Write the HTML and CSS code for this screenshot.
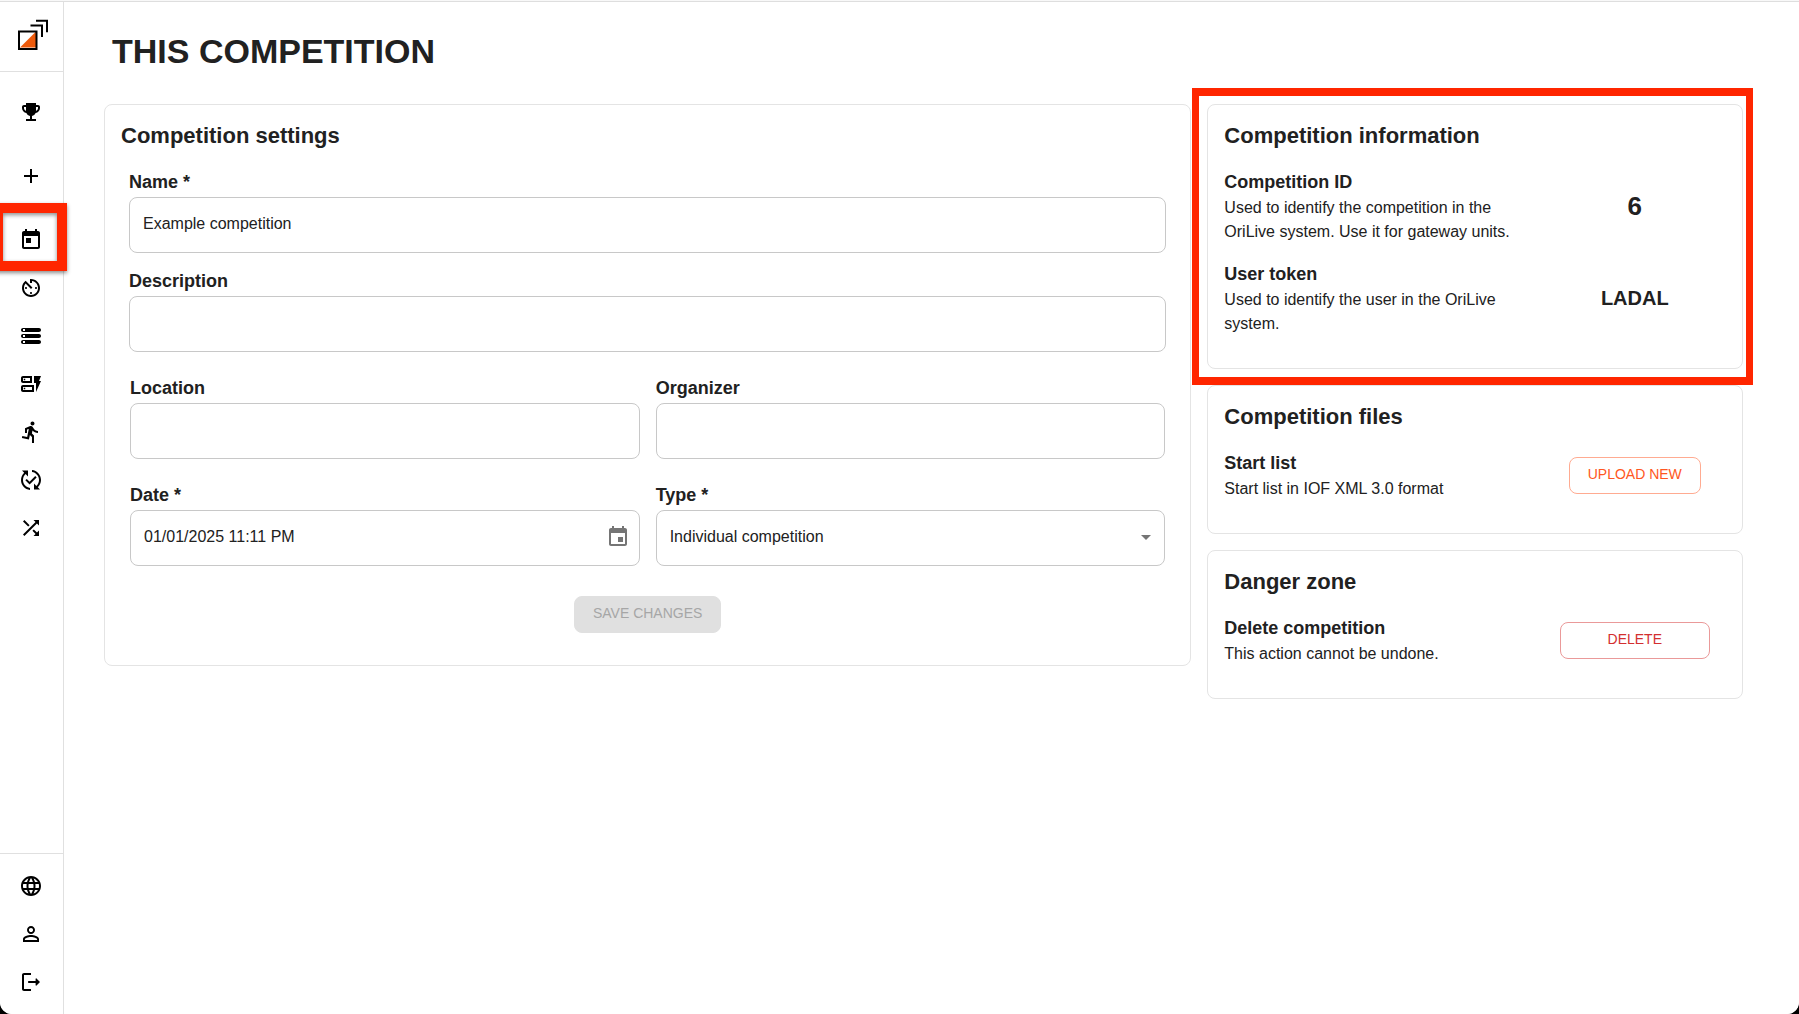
FILE: index.html
```html
<!DOCTYPE html>
<html lang="en">
<head>
<meta charset="utf-8">
<meta name="viewport" content="width=device-width, initial-scale=1">
<title>This competition</title>
<link rel="stylesheet" href="styles.css">
</head>
<body>
<div class="app">
  <aside class="sidebar">
    <a class="logo" href="#" aria-label="Home">
      <svg viewBox="0 0 32 32" width="32" height="32" fill="none" stroke="#000" stroke-width="2">
        <path d="M4 29.500 20 13.500V29.500z" fill="#ee5a0b" stroke="none"/>
        <path d="M3 13.500h17.500V31H3z"/>
        <path d="M14.500 7.500h11.500v11.500M20 2.700h11v11.500"/>
      </svg>
    </a>
    <nav class="nav" aria-label="Main">
      <a class="nav-item nav-spaced" href="#" aria-label="Competitions"><svg class="icon" viewBox="0 0 24 24"><path d="M19 5h-2V3H7v2H5c-1.100 0-2 .9-2 2v1c0 2.550 1.920 4.630 4.390 4.940.63 1.500 1.980 2.630 3.610 2.960V19H7v2h10v-2h-4v-3.100c1.630-.33 2.980-1.460 3.610-2.960C19.080 12.630 21 10.550 21 8V7c0-1.100-.9-2-2-2M5 8V7h2v3.820C5.840 10.400 5 9.300 5 8m14 0c0 1.300-.84 2.400-2 2.820V7h2z"/></svg></a>
      <a class="nav-item nav-spaced" href="#" aria-label="New competition"><svg class="icon" viewBox="0 0 24 24"><path d="M19 13h-6v6h-2v-6H5v-2h6V5h2v6h6z"/></svg></a>
      <a class="nav-item nav-current" href="#" aria-label="This competition" aria-current="page"><svg class="icon" viewBox="0 0 24 24"><path d="M19 3h-1V1h-2v2H8V1H6v2H5c-1.110 0-1.990.9-1.990 2L3 19c0 1.100.89 2 2 2h14c1.100 0 2-.9 2-2V5c0-1.100-.9-2-2-2m0 16H5V8h14zM7 10h5v5H7z"/></svg><span class="marker marker-nav"></span></a>
      <a class="nav-item" href="#" aria-label="Timing"><svg class="icon" viewBox="0 0 24 24"><path d="M11 17c0 .55.45 1 1 1s1-.45 1-1-.45-1-1-1-1 .45-1 1m0-14v4h2V5.080c3.390.49 6 3.390 6 6.920 0 3.870-3.130 7-7 7s-7-3.130-7-7c0-1.680.59-3.220 1.580-4.420L12 13l1.410-1.410-6.800-6.800v.02C4.420 6.450 3 9.050 3 12c0 4.970 4.020 9 9 9 4.970 0 9-4.030 9-9s-4.030-9-9-9zm7 9c0-.55-.45-1-1-1s-1 .45-1 1 .45 1 1 1 1-.45 1-1M6 12c0 .55.45 1 1 1s1-.45 1-1-.45-1-1-1-1 .45-1 1"/></svg></a>
      <a class="nav-item" href="#" aria-label="Categories"><svg class="icon" viewBox="0 0 24 24"><path d="M4 20h16c1.100 0 2-.9 2-2s-.9-2-2-2H4c-1.100 0-2 .9-2 2s.9 2 2 2m0-3h2v2H4zM2 6c0 1.100.9 2 2 2h16c1.100 0 2-.9 2-2s-.9-2-2-2H4c-1.100 0-2 .9-2 2m4 1H4V5h2zm-2 7h16c1.100 0 2-.9 2-2s-.9-2-2-2H4c-1.100 0-2 .9-2 2s.9 2 2 2m0-3h2v2H4z"/></svg></a>
      <a class="nav-item" href="#" aria-label="Controls"><svg class="icon" viewBox="0 0 24 24"><path fill-rule="evenodd" d="M13 11H4c-1.100 0-2-.9-2-2V6c0-1.100.9-2 2-2h9zM4 9h7V6H4zM15 20H4c-1.100 0-2-.9-2-2v-3c0-1.100.9-2 2-2h11zM4 18h9v-3H4zM22 9h-2l2-5h-7v7h2v9zM4.750 6.750h1.500v1.500h-1.500zM4.750 15.750h1.500v1.500h-1.500z"/></svg></a>
      <a class="nav-item" href="#" aria-label="Competitors"><svg class="icon" viewBox="0 0 24 24"><path d="M13.490 5.480c1.100 0 2-.9 2-2s-.9-2-2-2-2 .9-2 2 .9 2 2 2m-3.600 13.900 1-4.400 2.100 2v6h2v-7.500l-2.100-2 .6-3c1.300 1.500 3.300 2.500 5.500 2.500v-2c-1.900 0-3.500-1-4.300-2.400l-1-1.600c-.4-.6-1-1-1.700-1-.3 0-.5.1-.8.1l-5.200 2.200v4.700h2v-3.400l1.800-.7-1.600 8.100-4.900-1-.4 2z"/></svg></a>
      <a class="nav-item" href="#" aria-label="Changes"><svg class="icon" viewBox="0 0 24 24"><path d="m17.660 9.530-7.070 7.070-4.240-4.240 1.410-1.410 2.830 2.830 5.660-5.660zM4 12c0-2.330 1.020-4.420 2.620-5.880L9 8.500v-6H3l2.200 2.200C3.240 6.520 2 9.110 2 12c0 5.190 3.950 9.450 9 9.950v-2.020c-3.940-.49-7-3.860-7-7.930m18 0c0-5.190-3.950-9.450-9-9.950v2.020c3.940.49 7 3.860 7 7.930 0 2.330-1.020 4.420-2.620 5.880L15 15.500v6h6l-2.200-2.200c1.960-1.820 3.200-4.410 3.200-7.300"/></svg></a>
      <a class="nav-item" href="#" aria-label="Draw"><svg class="icon" viewBox="0 0 24 24"><path d="M10.590 9.170 5.410 4 4 5.410l5.170 5.170zM14.500 4l2.040 2.040L4 18.590 5.410 20 17.960 7.460 20 9.500V4zm.33 9.410-1.410 1.410 3.130 3.130L14.500 20H20v-5.500l-2.040 2.040z"/></svg></a>
    </nav>
    <nav class="nav-bottom" aria-label="Account">
      <a class="nav-item" href="#" aria-label="Language"><svg class="icon" viewBox="0 0 24 24"><path d="M11.990 2C6.470 2 2 6.480 2 12s4.470 10 9.990 10C17.520 22 22 17.520 22 12S17.520 2 11.990 2m6.930 6h-2.950c-.32-1.250-.78-2.450-1.380-3.560 1.840.63 3.370 1.910 4.330 3.560M12 4.040c.83 1.200 1.480 2.530 1.910 3.960h-3.820c.43-1.430 1.080-2.760 1.910-3.960M4.260 14C4.100 13.360 4 12.690 4 12s.1-1.360.26-2h3.380c-.08.66-.14 1.320-.14 2s.06 1.340.14 2zm.82 2h2.950c.32 1.250.78 2.450 1.380 3.560-1.840-.63-3.370-1.900-4.330-3.560m2.950-8H5.080c.96-1.660 2.490-2.930 4.330-3.560C8.810 5.550 8.350 6.750 8.030 8M12 19.960c-.83-1.200-1.480-2.530-1.910-3.960h3.820c-.43 1.430-1.080 2.760-1.910 3.960M14.340 14H9.660c-.09-.66-.16-1.320-.16-2s.07-1.350.16-2h4.680c.09.65.16 1.320.16 2s-.07 1.340-.16 2m.25 5.560c.6-1.110 1.060-2.310 1.380-3.560h2.950c-.96 1.650-2.490 2.930-4.330 3.560M16.360 14c.08-.66.14-1.320.14-2s-.06-1.340-.14-2h3.380c.16.64.26 1.310.26 2s-.1 1.360-.26 2z"/></svg></a>
      <a class="nav-item" href="#" aria-label="Profile"><svg class="icon" viewBox="0 0 24 24"><path d="M12 5.900c1.160 0 2.100.94 2.100 2.100s-.94 2.100-2.100 2.100S9.900 9.160 9.900 8s.94-2.100 2.100-2.100m0 9c2.970 0 6.100 1.460 6.100 2.100v1.100H5.900V17c0-.64 3.130-2.100 6.100-2.100M12 4C9.790 4 8 5.790 8 8s1.790 4 4 4 4-1.790 4-4-1.790-4-4-4m0 9c-2.670 0-8 1.340-8 4v3h16v-3c0-2.660-5.330-4-8-4"/></svg></a>
      <a class="nav-item" href="#" aria-label="Log out"><svg class="icon" viewBox="0 0 24 24"><path d="M5 5h7V3H5c-1.100 0-2 .9-2 2v14c0 1.100.9 2 2 2h7v-2H5zm16 7-3.500-3.500c-.3-.3-.9-.1-.9.400V11H10c-.6 0-1 .4-1 1s.4 1 1 1h6.600v2.100c0 .5.6.7.9.4z"/></svg></a>
    </nav>
  </aside>

  <main class="main">
    <h1 class="page-title">THIS COMPETITION</h1>
    <div class="grid">
      <section class="card settings">
        <h2 class="card-title">Competition settings</h2>
        <form class="form">
          <div class="field">
            <label class="label" for="name">Name *</label>
            <input class="input" id="name" type="text" value="Example competition">
          </div>
          <div class="field">
            <label class="label" for="description">Description</label>
            <input class="input" id="description" type="text">
          </div>
          <div class="pair">
            <div class="field">
              <label class="label" for="location">Location</label>
              <input class="input" id="location" type="text">
            </div>
            <div class="field">
              <label class="label" for="organizer">Organizer</label>
              <input class="input" id="organizer" type="text">
            </div>
            <div class="field">
              <label class="label" for="date">Date *</label>
              <div class="control">
                <input class="input" id="date" type="text" value="01/01/2025 11:11 PM">
                <button class="picker" type="button" aria-label="Choose date"><svg class="icon" viewBox="0 0 24 24"><path d="M17 12h-5v5h5zM16 1v2H8V1H6v2H5c-1.110 0-1.990.9-1.990 2L3 19c0 1.100.89 2 2 2h14c1.100 0 2-.9 2-2V5c0-1.100-.9-2-2-2h-1V1zm3 18H5V8h14z"/></svg></button>
              </div>
            </div>
            <div class="field">
              <label class="label" for="type">Type *</label>
              <div class="control">
                <select class="input" id="type"><option>Individual competition</option></select>
                <svg class="icon arrow" viewBox="0 0 24 24"><path d="m7 10 5 5 5-5z"/></svg>
              </div>
            </div>
          </div>
          <button class="button save" type="submit" disabled>SAVE CHANGES</button>
        </form>
      </section>

      <div class="side">
        <section class="card marked">
          <h2 class="card-title">Competition information</h2>
          <div class="item">
            <div class="item-text">
              <h3 class="label">Competition ID</h3>
              <p class="text">Used to identify the competition in the OriLive system. Use it for gateway units.</p>
            </div>
            <div class="item-value id">6</div>
          </div>
          <div class="item">
            <div class="item-text">
              <h3 class="label">User token</h3>
              <p class="text">Used to identify the user in the OriLive system.</p>
            </div>
            <div class="item-value token">LADAL</div>
          </div>
          <span class="marker marker-card"></span>
        </section>

        <section class="card">
          <h2 class="card-title">Competition files</h2>
          <div class="item">
            <div class="item-text">
              <h3 class="label">Start list</h3>
              <p class="text">Start list in IOF XML 3.0 format</p>
            </div>
            <div class="item-value"><button class="button upload" type="button">UPLOAD NEW</button></div>
          </div>
        </section>

        <section class="card">
          <h2 class="card-title">Danger zone</h2>
          <div class="item">
            <div class="item-text">
              <h3 class="label">Delete competition</h3>
              <p class="text">This action cannot be undone.</p>
            </div>
            <div class="item-value"><button class="button delete" type="button">DELETE</button></div>
          </div>
        </section>
      </div>
    </div>
  </main>
</div>
</body>
</html>
```
FILE: styles.css
```css
*, *::before, *::after { box-sizing: border-box; }

html { background: #000; }

body {
  display: flex;
  flex-direction: column;
  min-height: 100vh;
  margin: 0;
  padding-top: 1px;
  background: #f8f8f8;
  border-radius: 0 0 12px 12px;
  overflow: hidden;
  color: #212121;
  font-family: "Liberation Sans", Arial, Helvetica, sans-serif;
  font-size: 16px;
  line-height: 24px;
}

h1, h2, h3, p { margin: 0; }

.app {
  flex: 1;
  display: flex;
  border-top: 1px solid #dedede;
  background: #fff;
}

/* Sidebar */
.sidebar {
  flex: 0 0 64px;
  display: flex;
  flex-direction: column;
  border-right: 1px solid #e0e0e0;
}

.logo {
  display: flex;
  padding: 16px 0 21px 16px;
  border-bottom: 1px solid #e0e0e0;
}

.nav {
  flex: 1;
  padding-top: 16px;
}

.nav-bottom {
  padding: 8px 0;
  border-top: 1px solid #e0e0e0;
}

.nav-item {
  position: relative;
  display: flex;
  align-items: center;
  height: 48px;
  padding-left: 19px;
  color: #000;
}

.nav-spaced { margin-bottom: 16px; }

.icon {
  display: block;
  width: 24px;
  height: 24px;
  fill: currentColor;
}

/* Red highlight frames */
.marker {
  position: absolute;
  pointer-events: none;
  border: 10px solid #ff2600;
}

.marker-nav {
  top: -13px;
  right: -4px;
  bottom: -7px;
  left: -7px;
  z-index: 1;
  box-shadow: 0 2px 4px rgba(0, 0, 0, .45), inset 0 2px 4px rgba(0, 0, 0, .45);
}

.marker-card {
  inset: -17px -11px -17px -16px;
  border-width: 8px 7px;
}

/* Content */
.main {
  flex: 1;
  min-width: 0;
  padding: 29px 56px 32px 40px;
}

.page-title {
  margin: 0 8px 33px;
  font-size: 34px;
  line-height: 40px;
}

.grid {
  display: grid;
  grid-template-columns: repeat(12, 1fr);
  gap: 16px;
  align-items: start;
}

.settings { grid-column: span 8; }

.side {
  grid-column: span 4;
  display: grid;
  gap: 16px;
}

.card {
  padding: 17px 16px 32px;
  border: 1px solid #e4e4e4;
  border-radius: 8px;
  background: #fff;
}

.marked { position: relative; }

.card-title {
  margin-bottom: 18px;
  font-size: 22px;
  line-height: 28px;
}

.label {
  display: block;
  font-size: 18px;
  font-weight: 700;
  line-height: 28px;
}

/* Form */
.form {
  display: flex;
  flex-direction: column;
  gap: 14px;
  padding: 0 8px;
}

.field {
  display: grid;
  gap: 1px;
}

.pair {
  display: grid;
  grid-template-columns: 1fr 1fr;
  gap: 22px 16px;
  padding: 8px 1px 0;
}

.input {
  width: 100%;
  height: 56px;
  padding: 0 13px 2px;
  border: 1px solid #c8c8c8;
  border-radius: 8px;
  background: #fff;
  color: inherit;
  font: inherit;
  appearance: none;
}

.control { position: relative; }

.picker {
  position: absolute;
  top: 15px;
  right: 10px;
  padding: 0;
  border: 0;
  background: none;
  color: #757575;
}

.arrow {
  position: absolute;
  top: 15px;
  right: 7px;
  color: #757575;
  pointer-events: none;
}

/* Buttons */
.button {
  height: 37px;
  padding: 0 18px 3px;
  border: 1px solid;
  border-radius: 8px;
  background: #fff;
  font-family: inherit;
  font-size: 14px;
}

.save {
  align-self: center;
  margin-top: 16px;
  border-color: #e0e0e0;
  background: #e0e0e0;
  color: #a6a6a6;
}

.upload {
  border-color: #ffab91;
  color: #ff5722;
}

.delete {
  width: 100%;
  border-color: #ea9999;
  color: #d32f2f;
}

/* Rows of the side cards */
.item {
  display: grid;
  grid-template-columns: 7fr 4fr;
  align-items: center;
}

.item + .item { margin-top: 16px; }

.item-text { padding-right: 8px; }

.item-value {
  padding: 0 16px;
  text-align: center;
  font-weight: 700;
}

.id { font-size: 26px; }

.token { font-size: 20px; }
```
